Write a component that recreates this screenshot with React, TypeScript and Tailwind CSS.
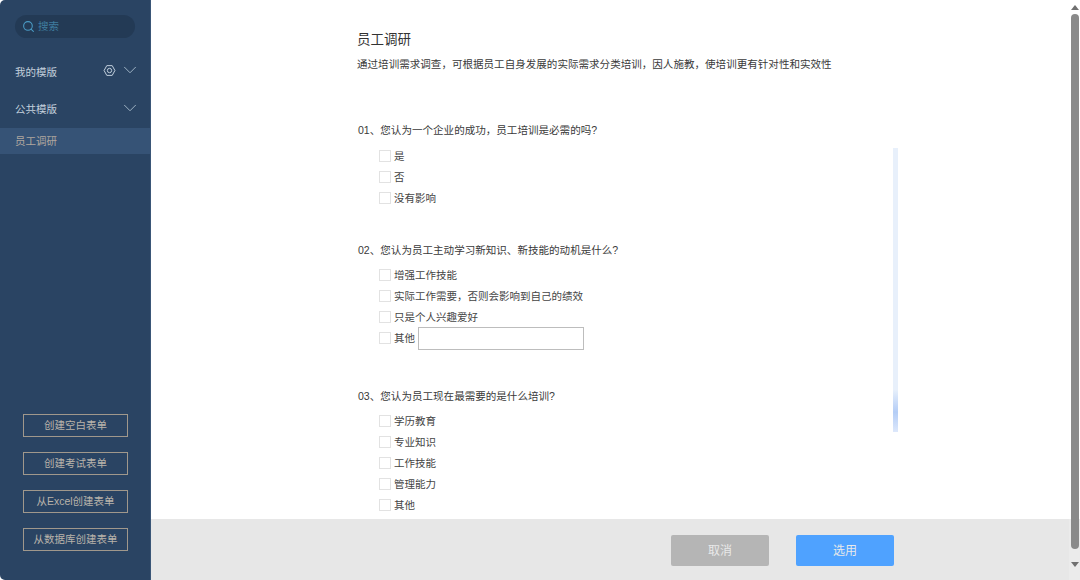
import { ChevronDown, Search } from "lucide-react"

const questions = [
  {
    no: "01",
    title: "您认为一个企业的成功，员工培训是必需的吗?",
    options: ["是", "否", "没有影响"],
    className: "mb-[33px]",
    optionsClassName: "mt-[8px]",
  },
  {
    no: "02",
    title: "您认为员工主动学习新知识、新技能的动机是什么?",
    options: ["增强工作技能", "实际工作需要，否则会影响到自己的绩效", "只是个人兴趣爱好", "其他"],
    other: true,
    className: "mb-[39px]",
    optionsClassName: "mt-[7px]",
  },
  {
    no: "03",
    title: "您认为员工现在最需要的是什么培训?",
    options: ["学历教育", "专业知识", "工作技能", "管理能力", "其他"],
    className: "",
    optionsClassName: "mt-[7px]",
  },
]

const createButtons = ["创建空白表单", "创建考试表单", "从Excel创建表单", "从数据库创建表单"]

function GearIcon() {
  return (
    <svg width="13" height="13" viewBox="0 0 24 24" fill="none" stroke="#c4d2de" strokeWidth="1.8">
      <path d="M7 3h10l5 9-5 9H7l-5-9z" strokeLinejoin="round" />
      <circle cx="12" cy="12" r="4" />
    </svg>
  )
}

function Sidebar() {
  return (
    <aside className="w-[151px] h-full shrink-0 bg-[#2a4463] rounded-l-[5px] border-r border-[#3a5677] flex flex-col text-[10.5px]">
      <div className="px-[15px] pt-[15px]">
        <div className="h-[23px] rounded-full bg-[#233a55] flex items-center gap-[3px] pl-[7px] text-[#3f7d9f]">
          <Search className="w-[13px] h-[13px] text-[#4a9ac4]" strokeWidth={2} />
          <span>搜索</span>
        </div>
      </div>

      <div className="mt-[26px] h-[16px] pl-[15px] pr-[15px] flex items-center text-[#c3d0dc]">
        <span className="flex-1 mt-px">我的模版</span>
        <span className="-mt-[4px]">
          <GearIcon />
        </span>
        <ChevronDown className="w-[22px] h-[22px] ml-[3px] -mr-[6px] -mt-[4px] text-[#a9bccd]" strokeWidth={1} />
      </div>

      <div className="mt-[22px] h-[16px] pl-[15px] pr-[15px] flex items-center justify-between text-[#c3d0dc]">
        <span>公共模版</span>
        <ChevronDown className="w-[22px] h-[22px] -mr-[6px] -mt-[4px] text-[#a9bccd]" strokeWidth={1} />
      </div>

      <div className="mt-[10px] h-[26px] pl-[15px] pt-px flex items-center bg-[#365376] text-[#b0a79f]">员工调研</div>

      <div className="mt-auto pb-[29px] pl-[23px] pr-[22px] flex flex-col gap-[15px]">
        {createButtons.map((label) => (
          <div
            key={label}
            className="h-[23px] border border-[#a0988c] flex items-center justify-center text-[#b9b3aa]"
          >
            {label}
          </div>
        ))}
      </div>
    </aside>
  )
}

function Question({ q }: { q: (typeof questions)[number] }) {
  return (
    <div className={q.className}>
      <div className="h-[16px] leading-[16px] pl-px text-[10.55px] text-[#3a3a3a]">
        {q.no}、{q.title}
      </div>
      <div className={`${q.optionsClassName} pl-[22px] flex flex-col`}>
        {q.options.map((option, i) => (
          <div key={option} className="h-[21px] flex items-center text-[10.5px] text-[#444]">
            <span className="w-[12px] h-[12px] mr-[3px] mb-[2px] bg-white border border-[#e2e2e2] shrink-0" />
            <span>{option}</span>
            {q.other && i === q.options.length - 1 && (
              <span className="ml-[3px] w-[166px] h-[23px] bg-white border border-[#bdbdbd]" />
            )}
          </div>
        ))}
      </div>
    </div>
  )
}

function Scrollbar() {
  return (
    <div className="absolute right-0 top-0 bottom-0 w-[11px] bg-white/20 flex flex-col items-center">
      <div className="h-[14px] flex items-center justify-center">
        <div className="w-0 h-0 border-x-[4px] border-x-transparent border-b-[5px] border-b-[#707070]" />
      </div>
      <div className="w-[8px] h-[535px] rounded-full bg-[#8a8a8a]" />
      <div className="flex-1 flex items-center justify-center">
        <div className="w-0 h-0 border-x-[4px] border-x-transparent border-t-[5px] border-t-[#707070]" />
      </div>
    </div>
  )
}

export default function App() {
  return (
    <div
      className="w-[1080px] h-[580px] overflow-hidden bg-white flex"
      style={{ fontFamily: '"Liberation Sans", "Noto Sans CJK SC", sans-serif' }}
    >
      <Sidebar />
      <main className="relative flex-1 h-full flex flex-col">
        <div className="flex-1 min-h-0 overflow-hidden pl-[206px] pt-[31px]">
          <h1 className="h-[18px] leading-[18px] text-[13.5px] text-[#333]">员工调研</h1>
          <p className="mt-[7px] h-[16px] leading-[16px] text-[10.55px] text-[#3a3a3a]">
            通过培训需求调查，可根据员工自身发展的实际需求分类培训，因人施教，使培训更有针对性和实效性
          </p>
          <div className="mt-[50px]">
            {questions.map((q) => (
              <Question key={q.no} q={q} />
            ))}
          </div>
        </div>

        <div className="absolute left-[742px] top-[148px] w-[5px] h-[284px] bg-gradient-to-b from-[#e8f0fb] from-85% via-[#b4cdf6] via-93% to-[#dde8fb]" />

        <footer className="h-[61px] shrink-0 bg-[#e7e7e7] flex items-center pt-[2px] pl-[520px] gap-[27px] text-[12px] text-[#e9e9e9]">
          <div className="w-[98px] h-[31px] rounded-[2px] bg-[#b5b5b5] flex items-center justify-center">取消</div>
          <div className="w-[98px] h-[31px] rounded-[2px] bg-[#4fa2ff] flex items-center justify-center">选用</div>
        </footer>

        <Scrollbar />
      </main>
    </div>
  )
}
